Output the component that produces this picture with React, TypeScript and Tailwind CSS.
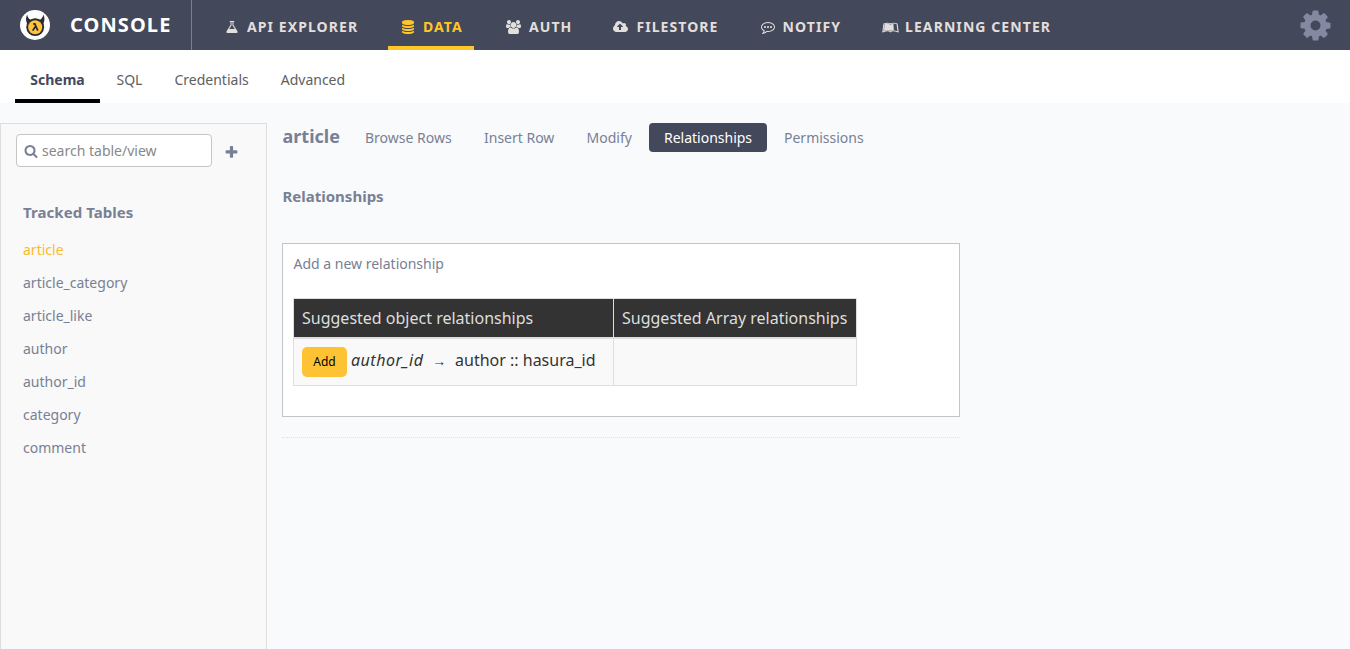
import React from "react";
import { FaLeanpub } from "react-icons/fa";

function Glyph({ d, className, box = "0 0 1792 1792" }: { d: string; className: string; box?: string }) {
  return (
    <svg viewBox={box} className={className} fill="currentColor" aria-hidden="true">
      <path d={d} />
    </svg>
  );
}

const FLASK =
  "M1591 1448q56 89 21.5 152.5t-140.5 63.5h-1152q-106 0-140.5-63.5t21.5-152.5l503-793v-399h-64q-26 0-45-19t-19-45 19-45 45-19h512q26 0 45 19t19 45-19 45-45 19h-64v399zm-779-725l-272 429h712l-272-429-20-31v-436h-128v436z";
const DATABASE =
  "M896 768q237 0 443-43t325-127v170q0 69-103 128t-280 93.5-385 34.5-385-34.5-280-93.5-103-128v-170q119 84 325 127t443 43zm0 768q237 0 443-43t325-127v170q0 69-103 128t-280 93.5-385 34.5-385-34.5-280-93.5-103-128v-170q119 84 325 127t443 43zm0-384q237 0 443-43t325-127v170q0 69-103 128t-280 93.5-385 34.5-385-34.5-280-93.5-103-128v-170q119 84 325 127t443 43zm0-1152q208 0 385 34.5t280 93.5 103 128v128q0 69-103 128t-280 93.5-385 34.5-385-34.5-280-93.5-103-128v-128q0-69 103-128t280-93.5 385-34.5z";
const USERS =
  "M529 896q-162 5-265 128h-134q-82 0-138-40.5t-56-118.5q0-353 124-353 6 0 43.5 21t97.5 42.5 119 21.5q67 0 133-23-5 37-5 66 0 139 81 256zm1071 637q0 120-73 189.5t-194 69.5h-874q-121 0-194-69.5t-73-189.5q0-53 3.5-103.5t14-109 26.5-108.5 43-97.5 62-81 85.5-53.5 111.5-20q10 0 43 21.5t73 48 107 48 135 21.5 135-21.5 107-48 73-48 43-21.5q61 0 111.5 20t85.5 53.5 62 81 43 97.5 26.5 108.5 14 109 3.5 103.5zm-1024-1277q0 106-75 181t-181 75-181-75-75-181 75-181 181-75 181 75 75 181zm704 384q0 159-112.5 271.5t-271.5 112.5-271.5-112.5-112.5-271.5 112.5-271.5 271.5-112.5 271.5 112.5 112.5 271.5zm576 225q0 78-56 118.5t-138 40.5h-134q-103-123-265-128 81-117 81-256 0-29-5-66 66 23 133 23 59 0 119-21.5t97.5-42.5 43.5-21q124 0 124 353zm-128-609q0 106-75 181t-181 75-181-75-75-181 75-181 181-75 181 75 75 181z";
const CLOUD =
  "M1216 864q0-14-9-23l-352-352q-9-9-23-9t-23 9l-351 351q-10 12-10 24 0 14 9 23t23 9h224v352q0 13 9.5 22.5t22.5 9.5h192q13 0 22.5-9.5t9.5-22.5v-352h224q13 0 22.5-9.5t9.5-22.5zm640 288q0 159-112.5 271.5t-271.5 112.5h-1088q-185 0-316.5-131.5t-131.5-316.5q0-130 70-240t188-165q-2-30-2-43 0-212 150-362t362-150q156 0 285.5 87t188.5 231q71-62 166-62 106 0 181 75t75 181q0 76-41 138 130 31 213.5 135.5t83.5 238.5z";
const COMMENT =
  "M640 896q0 53-37.5 90.5t-90.5 37.5-90.5-37.5-37.5-90.5 37.5-90.5 90.5-37.5 90.5 37.5 37.5 90.5zm384 0q0 53-37.5 90.5t-90.5 37.5-90.5-37.5-37.5-90.5 37.5-90.5 90.5-37.5 90.5 37.5 37.5 90.5zm384 0q0 53-37.5 90.5t-90.5 37.5-90.5-37.5-37.5-90.5 37.5-90.5 90.5-37.5 90.5 37.5 37.5 90.5zm-512-512q-204 0-381.5 69.5t-282 187.5-104.5 255q0 112 71.5 213.5t201.5 175.5l87 50-27 96q-24 91-70 172 152-63 275-171l43-38 57 6q69 8 130 8 204 0 381.5-69.5t282-187.5 104.5-255-104.5-255-282-187.5-381.5-69.5zm896 512q0 174-120 321.5t-326 233-450 85.5q-70 0-145-8-198 175-460 242-49 14-114 22h-5q-15 0-27-10.5t-16-27.5v-1q-3-4-.5-12t2-10 4.5-9.5l6-9 7-8.5 8-9q7-8 31-34.5t34.5-38 31-39.5 32.5-51 27-59 26-76q-157-89-247.5-220t-90.5-281q0-174 120-321.5t326-233 450-85.5 450 85.5 326 233 120 321.5z";
const COG =
  "M1152 896q0-106-75-181t-181-75-181 75-75 181 75 181 181 75 181-75 75-181zm512-109v222q0 12-8 23t-20 13l-185 28q-19 54-39 91 35 50 107 138 10 12 10 25t-9 23q-27 37-99 108t-94 71q-12 0-26-9l-138-108q-44 23-91 38-16 136-29 186-7 28-36 28h-222q-14 0-24.5-8.5t-11.5-21.5l-28-184q-49-16-90-37l-141 107q-10 9-25 9-14 0-25-11-126-114-165-168-7-10-7-23 0-12 8-23 15-21 51-66.5t54-70.5q-27-50-41-99l-183-27q-13-2-21-12.5t-8-23.5v-222q0-12 8-23t19-13l186-28q14-46 39-92-40-57-107-138-10-12-10-24 0-10 9-23 26-36 98.5-107.5t94.5-71.5q13 0 26 10l138 107q44-23 91-38 16-136 29-186 7-28 36-28h222q14 0 24.5 8.5t11.5 21.5l28 184q49 16 90 37l142-107q9-9 24-9 13 0 25 10 129 119 165 170 7 8 7 22 0 12-8 23-15 21-51 66.5t-54 70.5q26 50 41 98l183 28q13 2 21 12.5t8 23.5z";
const SEARCH =
  "M1216 832q0-185-131.5-316.5t-316.5-131.5-316.5 131.5-131.5 316.5 131.5 316.5 316.5 131.5 316.5-131.5 131.5-316.5zm512 832q0 52-38 90t-90 38q-54 0-90-38l-343-342q-179 124-399 124-143 0-273.5-55.5t-225-150-150-225-55.5-273.5 55.5-273.5 150-225 225-150 273.5-55.5 273.5 55.5 225 150 150 225 55.5 273.5q0 220-124 399l343 343q37 37 37 90z";
const PLUS =
  "M1600 736v192q0 40-28 68t-68 28h-416v416q0 40-28 68t-68 28h-192q-40 0-68-28t-28-68v-416h-416q-40 0-68-28t-28-68v-192q0-40 28-68t68-28h416v-416q0-40 28-68t68-28h192q40 0 68 28t28 68v416h416q40 0 68 28t28 68z";

function Logo() {
  return (
    <svg viewBox="0 0 30 30" className="h-[30px] w-[30px]" aria-hidden="true">
      <circle cx="15" cy="15" r="15" fill="#fff" />
      <path d="M7.200 4.500C5.700 7.500 5.700 10.500 6.900 13L7 17h16.500l.1-4c1.200-2.500 1.200-5.500-.3-8.500-.3 2.500-1.200 4-3.300 5.200C17 8.300 13.500 8.300 10.500 9.700 8.400 8.500 7.500 7 7.200 4.500Z" fill="#2a2c33" />
      <circle cx="15.200" cy="17.200" r="8.900" fill="#2a2c33" />
      <circle cx="15.200" cy="17.200" r="7" fill="#ffc23a" />
      <path d="M13.200 13.800h1.600l3 6.800M15.300 16.700l-2.600 3.900" fill="none" stroke="#24272e" strokeWidth="1.700" />
    </svg>
  );
}

type Item = { label: string; icon: React.ReactNode; className: string };

const NAV: Item[] = [
  { label: "API EXPLORER", className: "ml-[33px] w-[163px] text-[#e3dfdc]", icon: <Glyph d={FLASK} className="mr-2 h-[14px] w-[14px]" /> },
  { label: "DATA", className: "w-[86px] pl-[13px] text-[#ffc627] shadow-[inset_0_-4px_0_#ffc627]", icon: <Glyph d={DATABASE} className="mr-[8px] h-[14px] w-[14px]" /> },
  { label: "AUTH", className: "ml-[32px] text-[#e3dfdc]", icon: <Glyph d={USERS} box="-64 0 1920 1792" className="mr-2 h-[14px] w-[15px]" /> },
  { label: "FILESTORE", className: "ml-[41px] text-[#e3dfdc]", icon: <Glyph d={CLOUD} box="-64 0 1920 1792" className="mr-2 h-[14px] w-[15px]" /> },
  { label: "NOTIFY", className: "ml-[42px] text-[#e3dfdc]", icon: <Glyph d={COMMENT} className="mr-2 h-[14px] w-[14px]" /> },
  {
    label: "LEARNING CENTER",
    className: "ml-[41px] text-[#e3dfdc]",
    icon: <FaLeanpub preserveAspectRatio="none" className="mr-[6px] h-[13px] w-[17px]" />,
  },
];

const TABLES = ["article", "article_category", "article_like", "author", "author_id", "category", "comment"];

export default function App() {
  return (
    <div className="flex h-[649px] w-[1350px] flex-col overflow-hidden bg-[#f8fafc] font-['Noto_Sans',sans-serif] text-[14px] text-[#788095]">
      <header className="flex h-[50px] shrink-0 bg-[#43495a]">
        <div className="flex w-[192px] items-center border-r border-[#788095] pl-5 text-white">
          <Logo />
          <span className="ml-5 text-[20px] font-bold tracking-[1.100px]">CONSOLE</span>
        </div>
        <nav className="flex flex-1">
          {NAV.map((n) => (
            <a key={n.label} className={`flex items-center pt-1 text-[14px] font-bold tracking-[1.080px] whitespace-nowrap ${n.className}`}>
              {n.icon}
              <span className="pb-[2px]">{n.label}</span>
            </a>
          ))}
        </nav>
        <div className="flex items-center pt-px pr-[17px] text-[#8389a0]">
          <Glyph d={COG} className="h-[35px] w-[35px]" />
        </div>
      </header>

      <div className="flex h-[53px] shrink-0 bg-white pl-[15px] text-[#606060]">
        <a className="flex w-[85px] items-center justify-center border-b-4 border-black pt-[9px] font-bold text-[#43495a]">Schema</a>
        <a className="ml-[16.500px] flex items-center pt-[5px]">SQL</a>
        <a className="ml-8 flex items-center pt-[5px]">Credentials</a>
        <a className="ml-8 flex items-center pt-[5px]">Advanced</a>
      </div>

      <div className="flex min-h-0 flex-1 pt-5">
        <aside className="w-[267px] shrink-0 border border-b-0 border-[#dedede] bg-[#f9f9f9]">
          <div className="flex items-center pt-[10px] pl-[15px]">
            <div className="flex h-[33px] w-[196px] items-center rounded border border-[#c5c5c5] bg-white pl-[7px]">
              <Glyph d={SEARCH} className="h-[14px] w-[14px]" />
              <span className="ml-1 text-[#888]">search table/view</span>
            </div>
            <Glyph d={PLUS} className="mt-1 ml-[12px] h-[15px] w-[15px]" />
          </div>
          <div className="mt-[35px] pl-[22px]">
            <h2 className="text-[15px] leading-5 font-bold tracking-[0.060px]">Tracked Tables</h2>
            <ul className="mt-[11px]">
              {TABLES.map((t, i) => (
                <li key={t} className={i === 0 ? "h-[33px] leading-[33px] text-[#fdb92c]" : "h-[33px] leading-[33px]"}>
                  {t}
                </li>
              ))}
            </ul>
          </div>
        </aside>

        <main className="ml-[15px] w-[678px]">
          <div className="flex h-[29px] items-center">
            <h1 className="w-[83px] pb-[2px] pl-[0.500px] text-[18px] font-bold">article</h1>
            <a className="w-[119px]">Browse Rows</a>
            <a className="w-[102.500px]">Insert Row</a>
            <a className="w-[62.500px]">Modify</a>
            <a className="flex h-[29px] w-[118px] items-center justify-center rounded bg-[#43495a] text-white">Relationships</a>
            <a className="ml-[17px]">Permissions</a>
          </div>
          <h2 className="mt-[34px] pl-[0.500px] text-[15px] leading-5 font-bold">Relationships</h2>
          <section className="mt-[37px] h-[174px] border border-[#c5c5c5] bg-white pt-[10px] pl-[10px]">
            <p className="pl-[0.500px] leading-5">Add a new relationship</p>
            <table className="mt-6 w-[564px] table-fixed border-collapse text-[16px]">
              <thead>
                <tr className="h-[39px]">
                  <th className="w-[320px] border border-b-2 border-[#dedede] bg-[#333] px-2 py-0 text-left font-normal text-[#dedede]">Suggested object relationships</th>
                  <th className="border border-b-2 border-[#dedede] bg-[#333] px-2 py-0 text-left font-normal whitespace-nowrap text-[#dedede]">Suggested Array relationships</th>
                </tr>
              </thead>
              <tbody>
                <tr className="h-[48px] bg-[#f9f9f9] text-[#333]">
                  <td className="border border-[#dedede] px-2 py-0">
                    <div className="flex items-center">
                      <button className="h-[30px] w-[45px] rounded-[5px] bg-[#fdc334] text-[12px] text-black">Add</button>
                      <span className="ml-1 pb-1 whitespace-pre">
                        <i className="tracking-[0.5px]">author_id</i>
                        <span className="inline-block w-[31.500px] text-center text-[14px]">→</span>author :: hasura_id
                      </span>
                    </div>
                  </td>
                  <td className="border border-[#dedede]" />
                </tr>
              </tbody>
            </table>
          </section>
          <hr className="mt-5 border-t border-dotted border-[#dfe1e3]" />
        </main>
      </div>
    </div>
  );
}
